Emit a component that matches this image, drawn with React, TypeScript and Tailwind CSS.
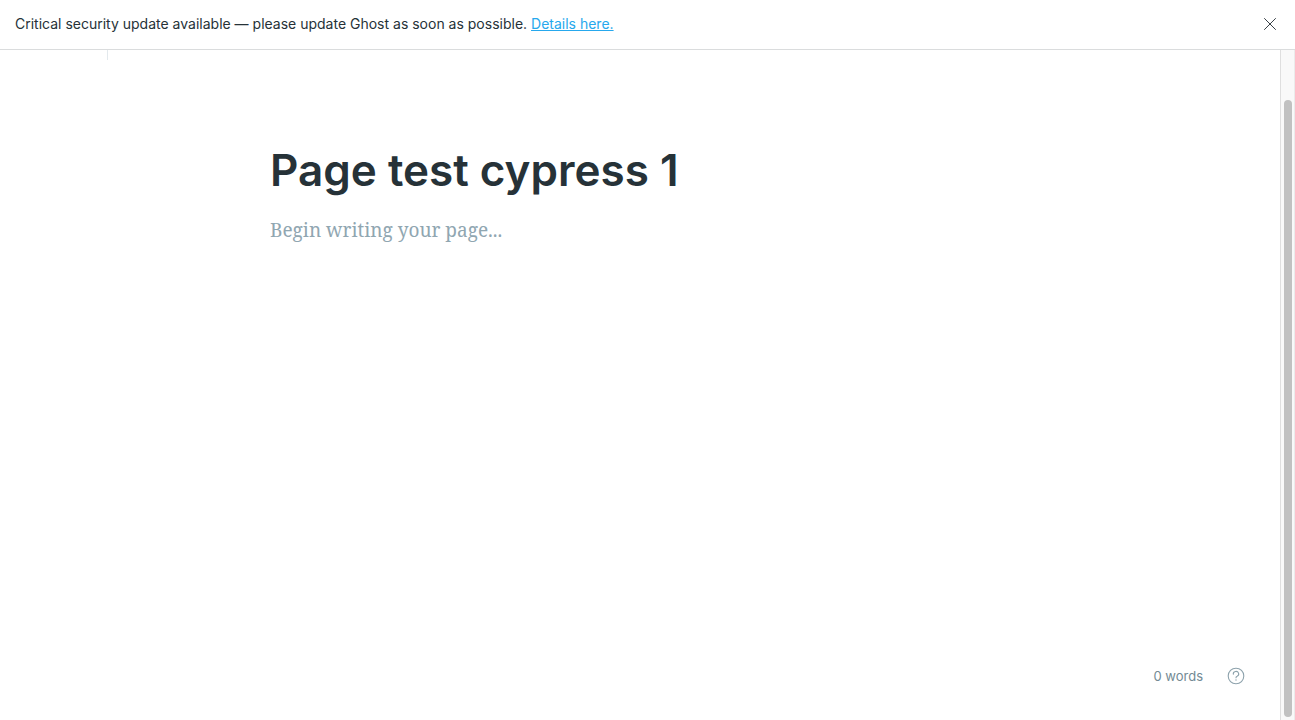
import { useState } from "react";

function CloseIcon() {
  return (
    <svg viewBox="0 0 12 12" className="size-3" fill="none" stroke="currentColor" strokeLinecap="round" aria-hidden="true">
      <path d="M.5.5l11 11M11.5.5l-11 11" />
    </svg>
  );
}

function HelpIcon() {
  return (
    <svg viewBox="0 0 18 18" className="size-[18px]" fill="none" stroke="currentColor" strokeWidth="1.1" strokeLinecap="round" strokeLinejoin="round" aria-hidden="true">
      <circle cx="9" cy="9" r="7.8" />
      <path d="M6.3 7.2A2.7 2.5 0 1 1 10.1 9.2c-.8.3-1.1.7-1.1 1.5" />
      <circle cx="9" cy="13" r=".7" fill="currentColor" stroke="none" />
    </svg>
  );
}

function UpdateBanner({ onClose }: { onClose: () => void }) {
  return (
    <header className="flex h-[50px] shrink-0 items-center justify-between border-b border-[#dadcdd] pb-0.5 pl-[15px] pr-[19px] text-sm text-[#263238]">
      <p>
        Critical security update available — please update Ghost as soon as possible.{" "}
        <a href="#details" className="text-[#26a8ed] underline">Details here.</a>
      </p>
      <button type="button" aria-label="Close" onClick={onClose} className="text-[#394047]">
        <CloseIcon />
      </button>
    </header>
  );
}

function Editor() {
  const [title, setTitle] = useState("Page test cypress 1");
  const [body, setBody] = useState("");
  const words = body.split(/\s+/).filter(Boolean).length;

  return (
    <main className="flex min-w-0 flex-1 flex-col">
      <div className="ml-[107px] h-[10px] border-l border-[#e3e9ed]" />
      <div className="mx-auto flex w-full max-w-[740px] flex-1 flex-col pt-[80px]">
        <input
          aria-label="Page title"
          value={title}
          onChange={(e) => setTitle(e.target.value)}
          className="h-[60px] w-full text-[44px] font-semibold text-[#263238] outline-none"
        />
        <textarea
          aria-label="Page content"
          placeholder="Begin writing your page..."
          value={body}
          onChange={(e) => setBody(e.target.value)}
          className="mt-[14px] w-full flex-1 resize-none font-[Georgia,'Noto_Serif','Liberation_Serif',serif] text-[19px] leading-8 text-[#263238] outline-none placeholder:text-[#90a6b1]"
        />
      </div>
      <footer className="flex items-center justify-end gap-6 pb-[35px] pr-[35px] text-[13px] leading-[18px] text-[#738a94]">
        <span>{words} words</span>
        <a href="#help" aria-label="Editor help" className="text-[#8da2ac]">
          <HelpIcon />
        </a>
      </footer>
    </main>
  );
}

export default function App() {
  const [banner, setBanner] = useState(true);
  return (
    <div className="flex h-screen flex-col bg-white font-[Inter,'Liberation_Sans',sans-serif]">
      {banner && <UpdateBanner onClose={() => setBanner(false)} />}
      <div className="flex min-h-0 flex-1">
        <Editor />
        <div aria-hidden="true" className="flex w-[15px] shrink-0 flex-col items-center border-x border-l-[#dfdfdf] border-r-[#ebebeb] bg-[#f9f9f9] pb-[3px] pt-[50px]">
          <div className="w-2 flex-1 rounded-full bg-[#c1c1c1]" />
        </div>
      </div>
    </div>
  );
}
